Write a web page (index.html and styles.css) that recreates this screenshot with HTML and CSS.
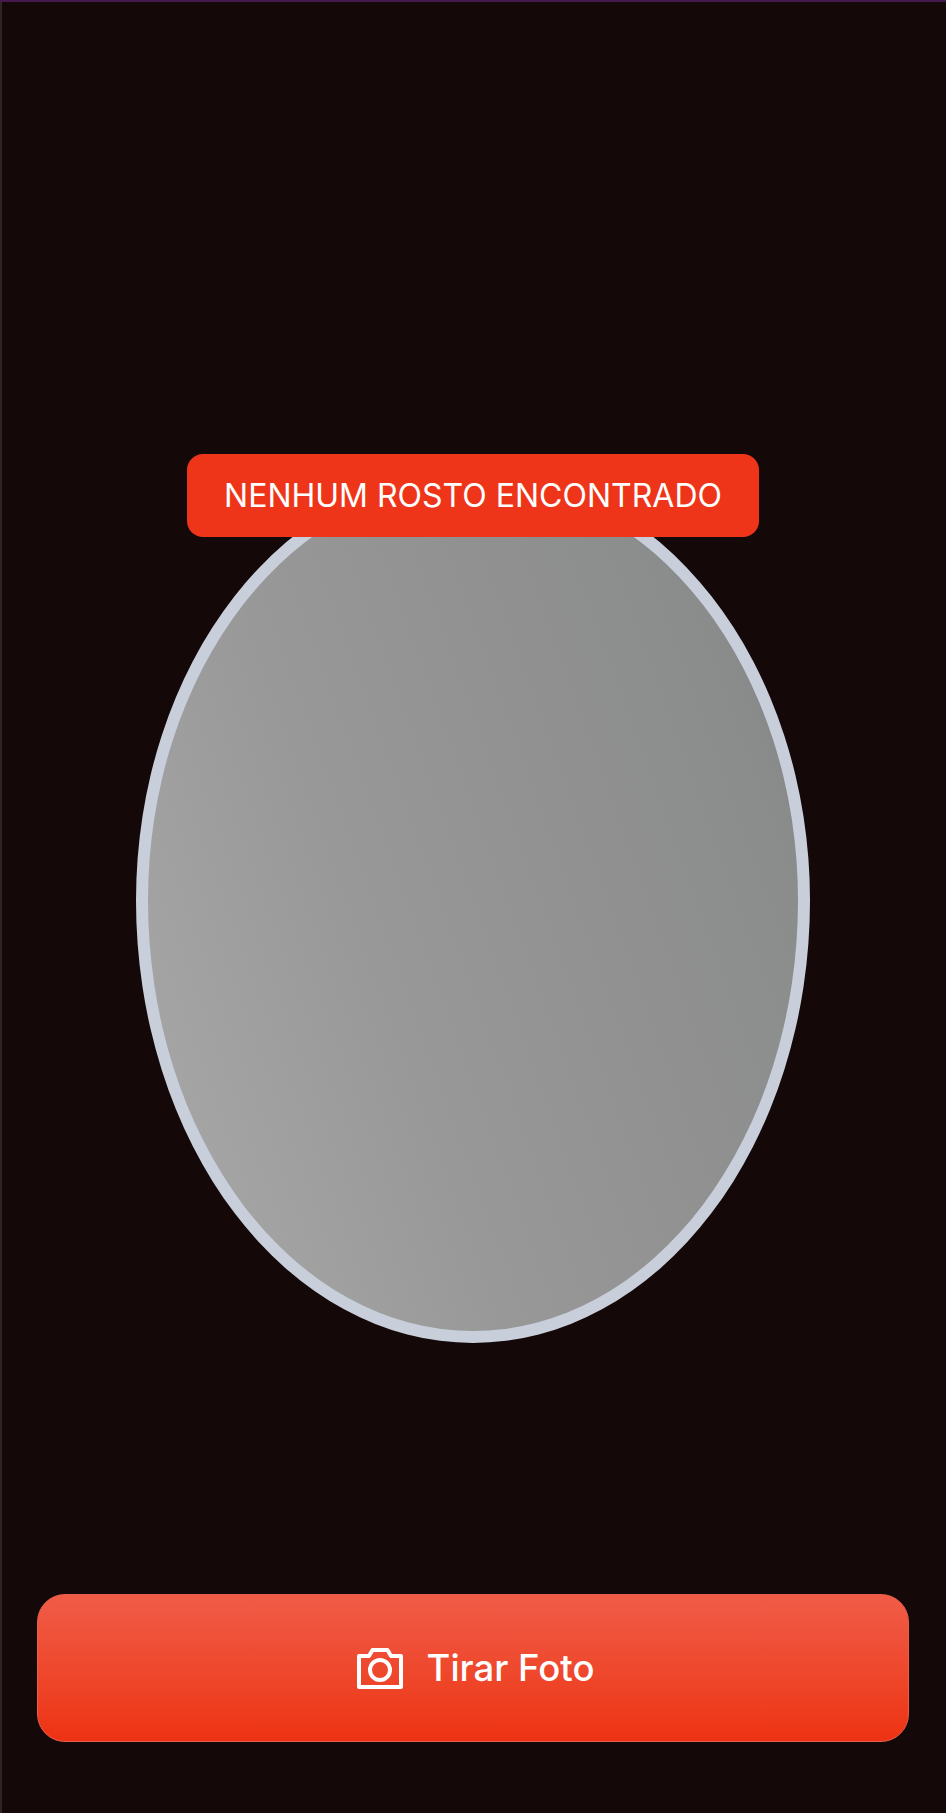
FILE: index.html
```html
<!DOCTYPE html>
<html lang="pt-BR">
<head>
<meta charset="utf-8">
<title>Tirar Foto</title>
<link rel="stylesheet" href="styles.css">
</head>
<body>
<main class="screen">
  <section class="stage">
    <div class="oval">
      <div class="status">NENHUM ROSTO ENCONTRADO</div>
    </div>
  </section>
  <button class="capture" type="button">
    <svg class="capture-icon" viewBox="0 0 46 41" aria-hidden="true">
      <path d="M2 8H12L15.5 2H30.5L34 8H44V39H2Z" fill="none" stroke="#fff" stroke-width="4" stroke-linejoin="round"/>
      <circle cx="23" cy="22" r="10" fill="none" stroke="#fff" stroke-width="4"/>
    </svg>
    <span>Tirar Foto</span>
  </button>
</main>
</body>
</html>
```

FILE: styles.css
```css
* { box-sizing: border-box; }
html, body { margin: 0; height: 100%; }
body {
  background: #140809;
  font-family: Inter, "Liberation Sans", sans-serif;
  color: #fff;
}
.screen {
  height: 1813px;
  display: flex;
  flex-direction: column;
  align-items: center;
  padding: 0 37px 71px;
  box-shadow: inset 0 2px 0 #45194d, inset 2px 0 0 #2c2627;
  overflow: hidden;
}
.stage {
  flex: 1;
  width: 100%;
  display: flex;
  justify-content: center;
  padding-top: 470px;
}
.oval {
  position: relative;
  width: 674px;
  height: 873px;
  border: 12px solid #c8cfda;
  border-radius: 50% / 49.3% 49.3% 50.7% 50.7%;
  background: linear-gradient(250deg, #787c7e 0%, #8a8c8c 14%, #909090 34%, #989898 62%, #aaaaaa 100%);
}
.status {
  position: absolute;
  top: -28px;
  left: 50%;
  transform: translateX(-50%);
  width: 572px;
  height: 83px;
  display: flex;
  align-items: center;
  justify-content: center;
  background: #ef3519;
  border-radius: 16px;
  font-size: 32px;
  white-space: nowrap;
}
.capture {
  width: 872px;
  height: 148px;
  flex: none;
  display: flex;
  align-items: center;
  justify-content: center;
  gap: 24px;
  padding: 0 0 0 5px;
  border: 1px solid #e8604a;
  border-radius: 28px;
  background: linear-gradient(180deg, #f05c48 0%, #ee4529 60%, #ee3213 100%);
  color: #fff;
  font: 450 36.5px Inter, "Liberation Sans", sans-serif;
}
.capture-icon { width: 46px; height: 41px; }
```
